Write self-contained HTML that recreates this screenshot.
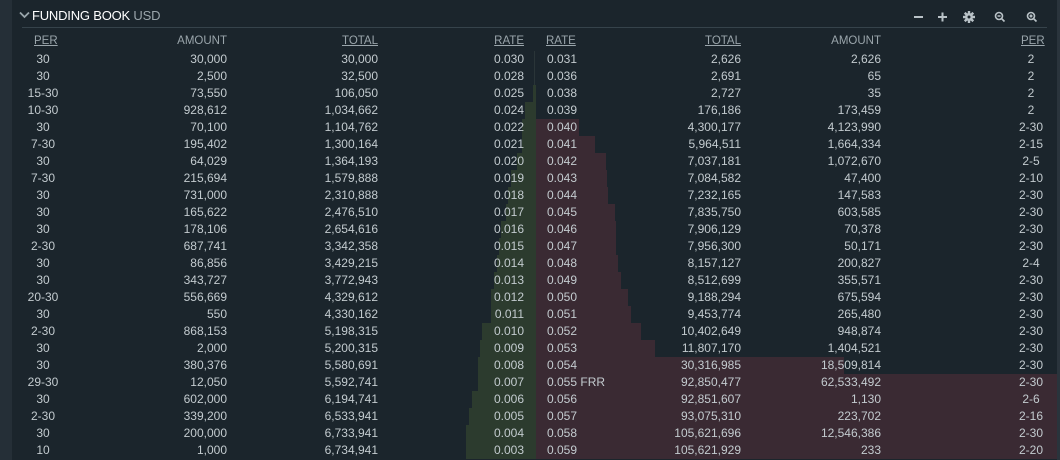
<!DOCTYPE html>
<html><head><meta charset="utf-8"><style>
*{margin:0;padding:0;box-sizing:border-box}
body{width:1060px;height:460px;overflow:hidden;background:#1b252c;font-family:"Liberation Sans",sans-serif;font-size:12px;color:#c3cbcf;position:relative}
.ls{position:absolute;left:0;top:0;width:12px;height:460px;background:#252f37}
.rs{position:absolute;right:0;top:0;width:3px;height:460px;background:#2a343c}
.title{position:absolute;left:32px;top:8px;font-size:13px;color:#fff;letter-spacing:-0.2px}
.title span{color:#9aa5ab}
.hl{position:absolute;left:22px;top:27px;width:1025px;height:1px;background:#36434b}
.hd{position:absolute;top:35px;color:#9aa5ab;font-size:11.5px}
.u{text-decoration:underline}
.r{position:absolute;height:17px;line-height:17px;left:0;width:1060px}
.r span{position:absolute;top:0;white-space:nowrap}
.a{left:13px;width:60px;text-align:center}
.b{right:833px;text-align:right}
.c{right:682px;text-align:right}
.d{right:536px;text-align:right}
.e{left:547px}
.f{right:319px;text-align:right}
.g{right:179px;text-align:right}
.h{left:1001px;width:60px;text-align:center}
.gb{position:absolute;background:#2c3b2e;height:17px}
.rb{position:absolute;background:#3a2a33;height:17px;left:536px}
.ic{position:absolute;top:10px}
</style></head><body>
<div class="ls"></div><div class="rs"></div>
<svg style="position:absolute;left:19px;top:11px" width="11" height="8" viewBox="0 0 11 8"><path d="M1 1.5 L5.5 6 L10 1.5" stroke="#9aa5ab" stroke-width="1.8" fill="none"/></svg>
<div class="title">FUNDING BOOK <span>USD</span></div>
<div class="hl"></div>
<svg class="ic" style="left:912px" width="130" height="14" viewBox="0 0 130 14">
<g stroke="#b9c2c7" stroke-width="2" fill="none">
<path d="M2 7 H11"/>
<path d="M26 7 H35 M30.5 2.5 V11.5"/>
<circle cx="57" cy="7" r="3"/>
<circle cx="87" cy="6" r="3.5" stroke-width="1.6"/><path d="M89.5 8.5 L92.5 11.5 M85.5 6 H88.5" stroke-width="1.6"/>
<circle cx="119" cy="6" r="3.5" stroke-width="1.6"/><path d="M121.5 8.5 L124.5 11.5 M117.5 6 H120.5 M119 4.5 V7.5" stroke-width="1.6"/>
</g>
<g fill="#b9c2c7"><rect x="55.8" y="1" width="2.4" height="12"/><rect x="51" y="5.8" width="12" height="2.4"/><rect x="55.8" y="1" width="2.4" height="12" transform="rotate(45 57 7)"/><rect x="55.8" y="1" width="2.4" height="12" transform="rotate(-45 57 7)"/></g>
<circle cx="57" cy="7" r="1.5" fill="#1b252c"/>
</svg>
<div class="hd u" style="left:34px">PER</div>
<div class="hd" style="right:833px">AMOUNT</div>
<div class="hd u" style="right:682px">TOTAL</div>
<div class="hd u" style="right:536px">RATE</div>
<div class="hd u" style="left:546px">RATE</div>
<div class="hd u" style="right:319px">TOTAL</div>
<div class="hd" style="right:179px">AMOUNT</div>
<div class="hd u" style="left:1021px">PER</div>

<div class="gb" style="top:51px;left:534px;width:1px;height:34px;background:#2a3538"></div>
<div class="gb" style="top:85px;left:533px;width:3px"></div>
<div class="gb" style="top:102px;left:525px;width:11px"></div>
<div class="gb" style="top:119px;left:522px;width:14px"></div>
<div class="gb" style="top:136px;left:522px;width:14px"></div>
<div class="gb" style="top:153px;left:517px;width:19px"></div>
<div class="gb" style="top:170px;left:511px;width:25px"></div>
<div class="gb" style="top:187px;left:508px;width:28px"></div>
<div class="gb" style="top:204px;left:506px;width:30px"></div>
<div class="gb" style="top:221px;left:501px;width:35px"></div>
<div class="gb" style="top:238px;left:499px;width:37px"></div>
<div class="gb" style="top:255px;left:497px;width:39px"></div>
<div class="gb" style="top:272px;left:494px;width:42px"></div>
<div class="gb" style="top:289px;left:491px;width:45px"></div>
<div class="gb" style="top:306px;left:491px;width:45px"></div>
<div class="gb" style="top:323px;left:482px;width:54px"></div>
<div class="gb" style="top:340px;left:480px;width:56px"></div>
<div class="gb" style="top:357px;left:478px;width:58px"></div>
<div class="gb" style="top:374px;left:478px;width:58px"></div>
<div class="gb" style="top:391px;left:472px;width:64px"></div>
<div class="gb" style="top:408px;left:469px;width:67px"></div>
<div class="gb" style="top:425px;left:466px;width:70px"></div>
<div class="gb" style="top:442px;left:466px;width:70px"></div>

<div class="rb" style="top:119px;width:43px"></div>
<div class="rb" style="top:136px;width:59px"></div>
<div class="rb" style="top:153px;width:70px"></div>
<div class="rb" style="top:170px;width:71px"></div>
<div class="rb" style="top:187px;width:72px"></div>
<div class="rb" style="top:204px;width:79px"></div>
<div class="rb" style="top:221px;width:80px"></div>
<div class="rb" style="top:238px;width:80px"></div>
<div class="rb" style="top:255px;width:82px"></div>
<div class="rb" style="top:272px;width:85px"></div>
<div class="rb" style="top:289px;width:92px"></div>
<div class="rb" style="top:306px;width:95px"></div>
<div class="rb" style="top:323px;width:105px"></div>
<div class="rb" style="top:340px;width:119px"></div>
<div class="rb" style="top:357px;width:308px"></div>
<div class="rb" style="top:374px;width:521px;height:85px"></div>

<div class="r" style="top:51px"><span class="a">30</span><span class="b">30,000</span><span class="c">30,000</span><span class="d">0.030</span><span class="e">0.031</span><span class="f">2,626</span><span class="g">2,626</span><span class="h">2</span></div>
<div class="r" style="top:68px"><span class="a">30</span><span class="b">2,500</span><span class="c">32,500</span><span class="d">0.028</span><span class="e">0.036</span><span class="f">2,691</span><span class="g">65</span><span class="h">2</span></div>
<div class="r" style="top:85px"><span class="a">15-30</span><span class="b">73,550</span><span class="c">106,050</span><span class="d">0.025</span><span class="e">0.038</span><span class="f">2,727</span><span class="g">35</span><span class="h">2</span></div>
<div class="r" style="top:102px"><span class="a">10-30</span><span class="b">928,612</span><span class="c">1,034,662</span><span class="d">0.024</span><span class="e">0.039</span><span class="f">176,186</span><span class="g">173,459</span><span class="h">2</span></div>
<div class="r" style="top:119px"><span class="a">30</span><span class="b">70,100</span><span class="c">1,104,762</span><span class="d">0.022</span><span class="e">0.040</span><span class="f">4,300,177</span><span class="g">4,123,990</span><span class="h">2-30</span></div>
<div class="r" style="top:136px"><span class="a">7-30</span><span class="b">195,402</span><span class="c">1,300,164</span><span class="d">0.021</span><span class="e">0.041</span><span class="f">5,964,511</span><span class="g">1,664,334</span><span class="h">2-15</span></div>
<div class="r" style="top:153px"><span class="a">30</span><span class="b">64,029</span><span class="c">1,364,193</span><span class="d">0.020</span><span class="e">0.042</span><span class="f">7,037,181</span><span class="g">1,072,670</span><span class="h">2-5</span></div>
<div class="r" style="top:170px"><span class="a">7-30</span><span class="b">215,694</span><span class="c">1,579,888</span><span class="d">0.019</span><span class="e">0.043</span><span class="f">7,084,582</span><span class="g">47,400</span><span class="h">2-10</span></div>
<div class="r" style="top:187px"><span class="a">30</span><span class="b">731,000</span><span class="c">2,310,888</span><span class="d">0.018</span><span class="e">0.044</span><span class="f">7,232,165</span><span class="g">147,583</span><span class="h">2-30</span></div>
<div class="r" style="top:204px"><span class="a">30</span><span class="b">165,622</span><span class="c">2,476,510</span><span class="d">0.017</span><span class="e">0.045</span><span class="f">7,835,750</span><span class="g">603,585</span><span class="h">2-30</span></div>
<div class="r" style="top:221px"><span class="a">30</span><span class="b">178,106</span><span class="c">2,654,616</span><span class="d">0.016</span><span class="e">0.046</span><span class="f">7,906,129</span><span class="g">70,378</span><span class="h">2-30</span></div>
<div class="r" style="top:238px"><span class="a">2-30</span><span class="b">687,741</span><span class="c">3,342,358</span><span class="d">0.015</span><span class="e">0.047</span><span class="f">7,956,300</span><span class="g">50,171</span><span class="h">2-30</span></div>
<div class="r" style="top:255px"><span class="a">30</span><span class="b">86,856</span><span class="c">3,429,215</span><span class="d">0.014</span><span class="e">0.048</span><span class="f">8,157,127</span><span class="g">200,827</span><span class="h">2-4</span></div>
<div class="r" style="top:272px"><span class="a">30</span><span class="b">343,727</span><span class="c">3,772,943</span><span class="d">0.013</span><span class="e">0.049</span><span class="f">8,512,699</span><span class="g">355,571</span><span class="h">2-30</span></div>
<div class="r" style="top:289px"><span class="a">20-30</span><span class="b">556,669</span><span class="c">4,329,612</span><span class="d">0.012</span><span class="e">0.050</span><span class="f">9,188,294</span><span class="g">675,594</span><span class="h">2-30</span></div>
<div class="r" style="top:306px"><span class="a">30</span><span class="b">550</span><span class="c">4,330,162</span><span class="d">0.011</span><span class="e">0.051</span><span class="f">9,453,774</span><span class="g">265,480</span><span class="h">2-30</span></div>
<div class="r" style="top:323px"><span class="a">2-30</span><span class="b">868,153</span><span class="c">5,198,315</span><span class="d">0.010</span><span class="e">0.052</span><span class="f">10,402,649</span><span class="g">948,874</span><span class="h">2-30</span></div>
<div class="r" style="top:340px"><span class="a">30</span><span class="b">2,000</span><span class="c">5,200,315</span><span class="d">0.009</span><span class="e">0.053</span><span class="f">11,807,170</span><span class="g">1,404,521</span><span class="h">2-30</span></div>
<div class="r" style="top:357px"><span class="a">30</span><span class="b">380,376</span><span class="c">5,580,691</span><span class="d">0.008</span><span class="e">0.054</span><span class="f">30,316,985</span><span class="g">18,509,814</span><span class="h">2-30</span></div>
<div class="r" style="top:374px"><span class="a">29-30</span><span class="b">12,050</span><span class="c">5,592,741</span><span class="d">0.007</span><span class="e">0.055 FRR</span><span class="f">92,850,477</span><span class="g">62,533,492</span><span class="h">2-30</span></div>
<div class="r" style="top:391px"><span class="a">30</span><span class="b">602,000</span><span class="c">6,194,741</span><span class="d">0.006</span><span class="e">0.056</span><span class="f">92,851,607</span><span class="g">1,130</span><span class="h">2-6</span></div>
<div class="r" style="top:408px"><span class="a">2-30</span><span class="b">339,200</span><span class="c">6,533,941</span><span class="d">0.005</span><span class="e">0.057</span><span class="f">93,075,310</span><span class="g">223,702</span><span class="h">2-16</span></div>
<div class="r" style="top:425px"><span class="a">30</span><span class="b">200,000</span><span class="c">6,733,941</span><span class="d">0.004</span><span class="e">0.058</span><span class="f">105,621,696</span><span class="g">12,546,386</span><span class="h">2-30</span></div>
<div class="r" style="top:442px"><span class="a">10</span><span class="b">1,000</span><span class="c">6,734,941</span><span class="d">0.003</span><span class="e">0.059</span><span class="f">105,621,929</span><span class="g">233</span><span class="h">2-20</span></div>
</body></html>
